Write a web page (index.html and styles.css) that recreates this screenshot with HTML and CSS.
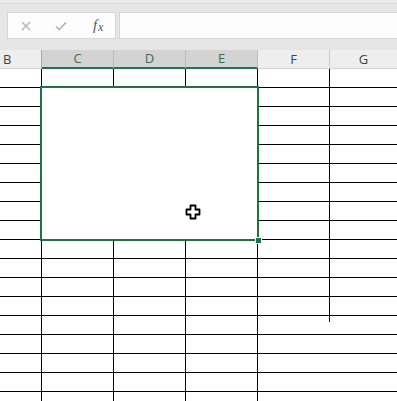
FILE: index.html
```html
<!DOCTYPE html>
<html lang="en">
  <head>
    <meta charset="UTF-8" />
    <title>Sheet</title>
    <link rel="stylesheet" href="styles.css">
  </head>
  <body>
    <div class="toolbar">
      <div class="fx-box">
        <span class="tool">
          <svg viewBox="0 0 10 10" width="10" height="10">
            <path d="M1 1L9 9M9 1L1 9" stroke="#b4b4b4" stroke-width="1.4" fill="none"/>
          </svg>
        </span>
        <span class="tool">
          <svg viewBox="0 0 12 10" width="12" height="10">
            <path d="M1 5.5L4.2 8.6L11 1.4" stroke="#b4b4b4" stroke-width="1.6" fill="none"/>
          </svg>
        </span>
        <span class="tool fx"><i>f</i><i class="x">x</i></span>
      </div>
      <div class="formula-input"></div>
    </div>

    <div class="sheet">
      <div class="row head">
        <div class="cell col-b">B</div>
        <div class="cell sel">C</div>
        <div class="cell sel">D</div>
        <div class="cell sel">E</div>
        <div class="cell">F</div>
        <div class="cell">G</div>
      </div>

      <div class="row"><div class="cell"></div><div class="cell"></div><div class="cell"></div><div class="cell"></div><div class="cell"></div><div class="cell"></div></div>

      <!-- merged range C2:E9 -->
      <div class="row"><div class="cell"></div><div class="cell merged"></div><div class="cell"></div><div class="cell"></div></div>
      <div class="row"><div class="cell"></div><div class="cell merged"></div><div class="cell"></div><div class="cell"></div></div>
      <div class="row"><div class="cell"></div><div class="cell merged"></div><div class="cell"></div><div class="cell"></div></div>
      <div class="row"><div class="cell"></div><div class="cell merged"></div><div class="cell"></div><div class="cell"></div></div>
      <div class="row"><div class="cell"></div><div class="cell merged"></div><div class="cell"></div><div class="cell"></div></div>
      <div class="row"><div class="cell"></div><div class="cell merged"></div><div class="cell"></div><div class="cell"></div></div>
      <div class="row"><div class="cell"></div><div class="cell merged"></div><div class="cell"></div><div class="cell"></div></div>
      <div class="row"><div class="cell"></div><div class="cell merged last"></div><div class="cell"></div><div class="cell"></div></div>

      <div class="row"><div class="cell"></div><div class="cell"></div><div class="cell"></div><div class="cell"></div><div class="cell"></div><div class="cell"></div></div>
      <div class="row"><div class="cell"></div><div class="cell"></div><div class="cell"></div><div class="cell"></div><div class="cell"></div><div class="cell"></div></div>
      <div class="row"><div class="cell"></div><div class="cell"></div><div class="cell"></div><div class="cell"></div><div class="cell"></div><div class="cell"></div></div>
      <div class="row"><div class="cell"></div><div class="cell"></div><div class="cell"></div><div class="cell"></div><div class="cell"></div><div class="cell"></div></div>
      <div class="row"><div class="cell"></div><div class="cell"></div><div class="cell"></div><div class="cell"></div><div class="cell stub"></div><div class="cell"></div></div>
      <div class="row"><div class="cell"></div><div class="cell"></div><div class="cell"></div><div class="cell"></div><div class="cell open"></div><div class="cell"></div></div>
      <div class="row"><div class="cell"></div><div class="cell"></div><div class="cell"></div><div class="cell"></div><div class="cell open"></div><div class="cell"></div></div>
      <div class="row"><div class="cell"></div><div class="cell"></div><div class="cell"></div><div class="cell"></div><div class="cell open"></div><div class="cell"></div></div>
      <div class="row"><div class="cell"></div><div class="cell"></div><div class="cell"></div><div class="cell"></div><div class="cell open"></div><div class="cell"></div></div>

      <div class="selection"><span class="handle"></span></div>

      <svg class="cursor" viewBox="0 0 16 16" width="16" height="16">
        <path d="M5.5 1.5h5v4h4v5h-4v4h-5v-4h-4v-5h4z" fill="#fff" stroke="#000" stroke-width="1.8" stroke-linejoin="round"/>
      </svg>
    </div>
  </body>
</html>
```

FILE: styles.css
```css
:root {
  --grid-line: #000;
  --select-green: #217346;
  --toolbar-bg: #e6e6e6;
  --head-bg: #eeeeee;
  --head-sel-bg: #d3d3d3;
}

* {
  margin: 0;
  padding: 0;
  box-sizing: border-box;
}

body {
  width: 397px;
  height: 401px;
  overflow: hidden;
  background: #fff;
  font-family: "Open Sans", "Noto Sans", sans-serif;
}

/* formula bar */
.toolbar {
  display: flex;
  height: 50px;
  padding-top: 12px;
  padding-bottom: 11px;
  background: var(--toolbar-bg);
  border-top: 3px solid #e9e9e9;
  box-shadow: inset 0 1px 0 #d9d9d9;
}

.fx-box {
  display: flex;
  align-items: center;
  width: 109px;
  margin-left: 7px;
  margin-top: -3px;
  background: #fdfdfd;
  border: 1px solid #d6d6d6;
}

.tool {
  display: flex;
  align-items: center;
  justify-content: center;
  width: 36px;
  height: 100%;
}

.fx {
  font-family: "Liberation Serif", "DejaVu Serif", serif;
  color: #555;
  font-size: 15px;
  padding-left: 2px;
}

.fx .x {
  font-size: 12px;
  margin-left: 1px;
  margin-top: 3px;
}

.formula-input {
  flex: 1;
  margin-left: 3px;
  margin-top: -3px;
  background: #fdfdfd;
  border: 1px solid #d6d6d6;
  border-right: none;
}

/* grid */
.sheet {
  position: relative;
}

.row {
  display: grid;
  grid-template-columns: 42px 72px 72px 72px 72px 1fr;
  height: 19px;
}

.cell {
  border-right: 1px solid var(--grid-line);
  border-bottom: 1px solid var(--grid-line);
}

.cell:last-child {
  border-right: none;
}

.merged {
  grid-column: span 3;
  border: none;
}

.cell.stub {
  border-right: none;
  background: linear-gradient(var(--grid-line), var(--grid-line)) right top / 1px 6px no-repeat;
}

.cell.open {
  border-right: none;
}

.head .cell {
  background: var(--head-bg);
  border-right: 1px solid #cacaca;
  border-bottom: 1px solid #d4d4d4;
  color: #444;
  font-size: 13px;
  line-height: 18px;
  text-align: center;
}

.head .col-b {
  text-align: left;
  padding-left: 3px;
  border-right-color: #a8a8a8;
}

.head .sel {
  background: var(--head-sel-bg);
  color: #3d6b51;
  border-right-color: #bdbdbd;
  border-bottom: 2px solid var(--select-green);
  line-height: 17px;
}

.head .cell:last-child {
  border-right: none;
}

.selection {
  position: absolute;
  left: 40px;
  top: 36px;
  width: 219px;
  height: 155px;
  border: 2px solid var(--select-green);
}

.handle {
  position: absolute;
  right: -4px;
  bottom: -4px;
  width: 5px;
  height: 5px;
  background: var(--select-green);
  box-shadow: 0 0 0 1px #fff;
}

.cursor {
  position: absolute;
  left: 185px;
  top: 154px;
}
```
